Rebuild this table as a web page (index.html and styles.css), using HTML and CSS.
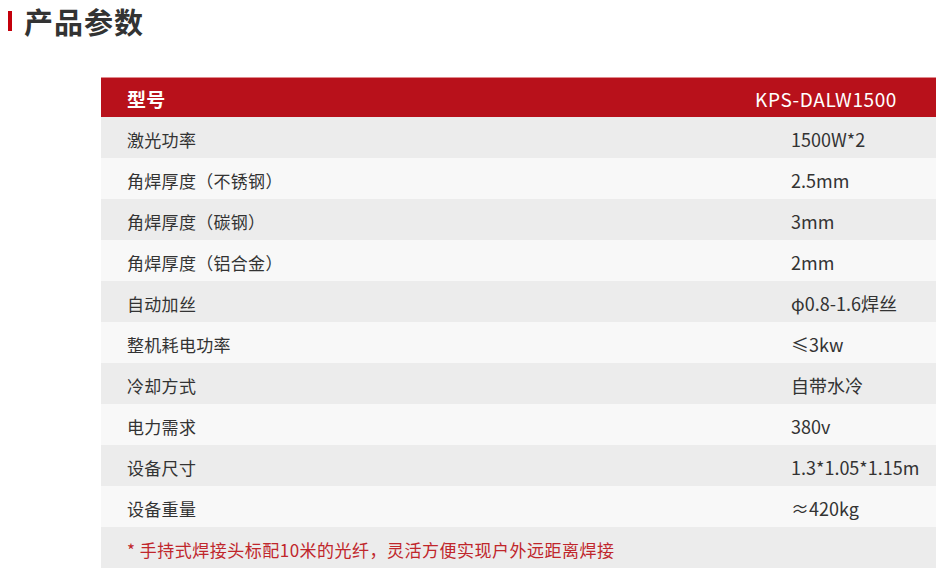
FILE: index.html
```html
<!DOCTYPE html>
<html lang="zh">
<head>
<meta charset="utf-8">
<link rel="stylesheet" href="styles.css">
</head>
<body>
<div class="title"><span class="bar"></span><h1>产品参数</h1></div>
<div class="table">
  <div class="row head"><span class="k">型号</span><span class="v">KPS-DALW1500</span></div>
  <div class="row"><span class="k">激光功率</span><span class="v">1500W*2</span></div>
  <div class="row"><span class="k">角焊厚度（不锈钢）</span><span class="v">2.5mm</span></div>
  <div class="row"><span class="k">角焊厚度（碳钢）</span><span class="v">3mm</span></div>
  <div class="row"><span class="k">角焊厚度（铝合金）</span><span class="v">2mm</span></div>
  <div class="row"><span class="k">自动加丝</span><span class="v">φ0.8-1.6焊丝</span></div>
  <div class="row"><span class="k">整机耗电功率</span><span class="v">≤3kw</span></div>
  <div class="row"><span class="k">冷却方式</span><span class="v">自带水冷</span></div>
  <div class="row"><span class="k">电力需求</span><span class="v">380v</span></div>
  <div class="row"><span class="k">设备尺寸</span><span class="v">1.3*1.05*1.15m</span></div>
  <div class="row"><span class="k">设备重量</span><span class="v">≈420kg</span></div>
  <div class="row note"><span class="k">* 手持式焊接头标配10米的光纤，灵活方便实现户外远距离焊接</span></div>
</div>
</body>
</html>
```
FILE: styles.css
```css
* { box-sizing: border-box; }
html, body { margin: 0; padding: 0; background: #fff; }
body {
  font-family: "Noto Sans CJK SC", "Noto Sans", sans-serif;
  color: #333;
  width: 944px;
  height: 574px;
  overflow: hidden;
}
.title {
  display: flex;
  align-items: center;
  padding: 3px 0 0 8px;
  height: 38px;
}
.bar {
  width: 4px;
  height: 20px;
  background: #c4000b;
  margin-right: 12px;
}
.title h1 {
  margin: 0;
  font-size: 29px;
  font-weight: 700;
  color: #333;
  line-height: 38px;
  letter-spacing: 1px;
}
.table {
  margin: 39px 8px 0 101px;
  display: flex;
  flex-direction: column;
}
.row {
  height: 41px;
  display: grid;
  grid-template-columns: 1fr 145px;
  align-items: center;
  padding-left: 26px;
  font-size: 17px;
  padding-top: 3px;
}
.row .k { letter-spacing: 0.3px; }
.row .v { font-size: 18px; letter-spacing: 0; }
.row:nth-child(even) { background: #ececec; }
.row:nth-child(odd) { background: #f8f8f8; }
.row.head {
  background: #b8111b;
  color: #fff;
  height: 40px;
  border-top: 1px solid #e08a8e;
  padding-top: 1px;
  grid-template-columns: 1fr auto;
  padding-right: 39px;
}
.row.head .k { font-weight: 700; font-size: 19px; }
.row.head .v { font-size: 19px; letter-spacing: 0.6px; }
.row.note { background: #ececec; }
.row.note .k { color: #c0262b; grid-column: 1 / -1; letter-spacing: 0.5px; }
```
